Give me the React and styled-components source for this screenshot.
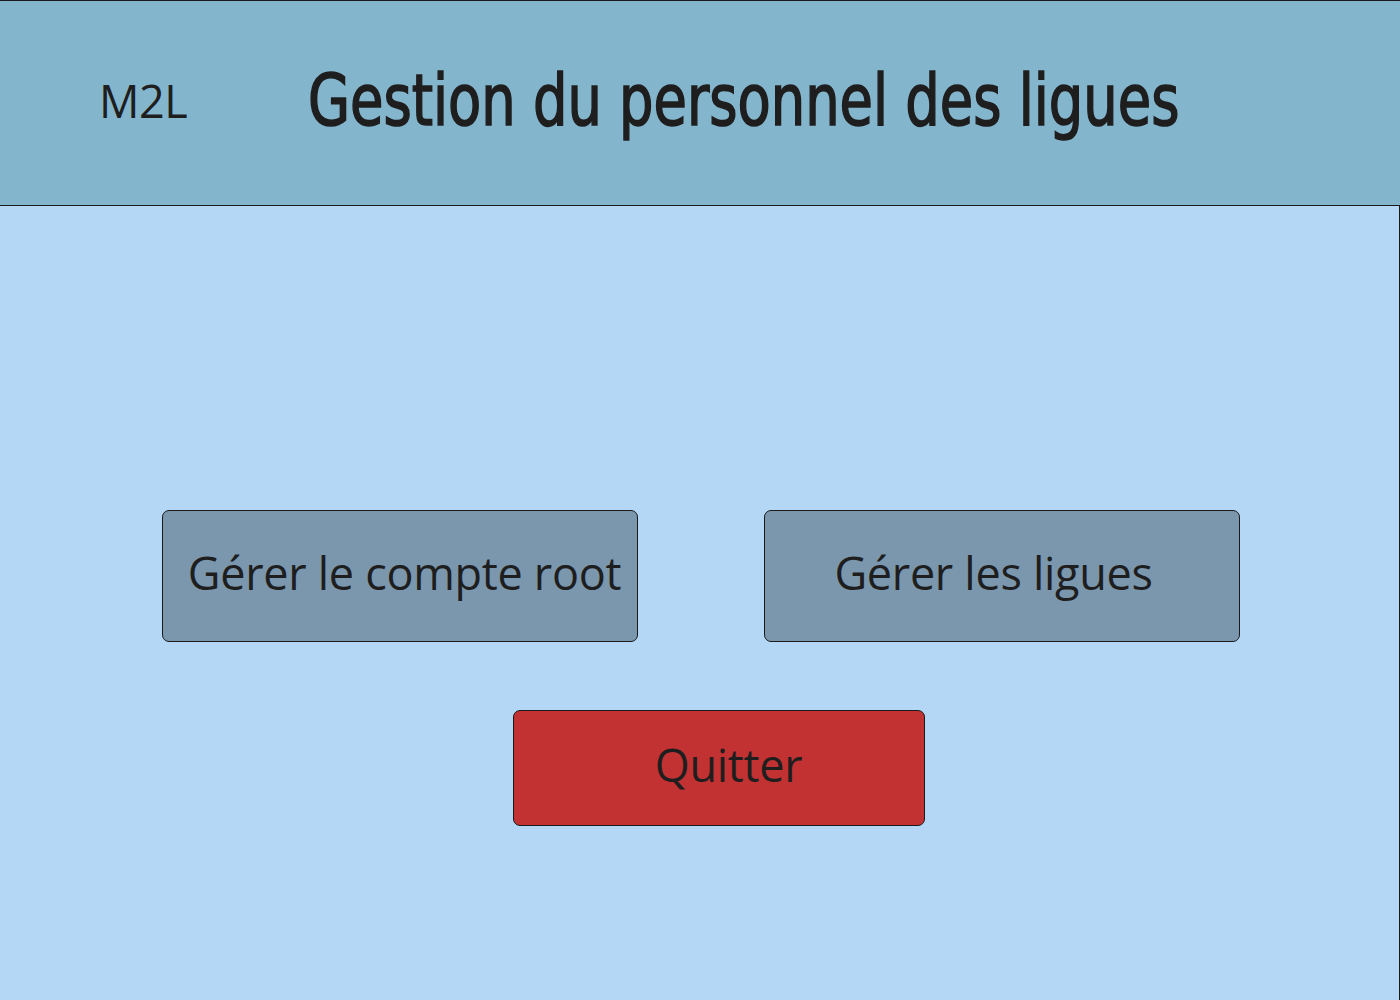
import React from 'react'
import styled, { createGlobalStyle } from 'styled-components'

const GlobalStyle = createGlobalStyle`
  html, body {
    margin: 0;
    padding: 0;
    background: #b3d7f5;
  }
  body {
    font-family: "Open Sans", "Liberation Sans", sans-serif;
    color: #1f1e1f;
  }
`;

const Page = styled.div`
  display: flex;
  flex-direction: column;
  width: 1400px;
  height: 1000px;
  box-sizing: border-box;
`;

const Header = styled.header`
  display: flex;
  align-items: center;
  height: 206px;
  box-sizing: border-box;
  padding: 0 0 6px 99px;
  background: #83b6cd;
  border-top: 1px solid #1a1a1a;
  border-bottom: 1px solid #1a1a1a;
`;

const Logo = styled.span`
  flex-shrink: 0;
  width: 209px;
  font-family: "Open Sans", sans-serif;
  font-size: 45px;
  letter-spacing: -0.5px;
`;

const Title = styled.h1`
  margin: 0;
  font-family: "DejaVu Sans Condensed", "Liberation Sans Narrow", sans-serif;
  font-weight: 400;
  font-size: 72px;
  -webkit-text-stroke: 1.6px #1f1e1f;
  transform-origin: left center;
  transform: scaleX(0.838);
  white-space: nowrap;
`;

const Main = styled.main`
  flex: 1;
  display: flex;
  flex-direction: column;
  align-items: center;
  gap: 68px;
  padding: 304px 0 0 2px;
  border-right: 1px solid #1a1a1a;
`;

const Row = styled.div`
  display: flex;
  gap: 126px;
`;

const ActionButton = styled.button`
  display: flex;
  align-items: center;
  justify-content: center;
  width: ${p => p.$w}px;
  height: ${p => p.$h}px;
  margin-left: ${p => p.$shift || 0}px;
  padding: 0 ${p => p.$offset < 0 ? -2 * p.$offset : 0}px 8px ${p => p.$offset > 0 ? 2 * p.$offset : 0}px;
  box-sizing: border-box;
  background: ${p => p.$danger ? '#c33232' : '#7a97ae'};
  border: 1px solid #1a1a1a;
  border-radius: 7px;
  font-family: "Open Sans", sans-serif;
  font-size: 45px;
  letter-spacing: -0.3px;
  color: #1f1e1f;
  cursor: pointer;
`;

export default function App() {
  return (
    <Page>
      <GlobalStyle />
      <Header>
        <Logo>M2L</Logo>
        <Title>Gestion du personnel des ligues</Title>
      </Header>
      <Main>
        <Row>
          <ActionButton $w={476} $h={132} $offset={5}>Gérer le compte root</ActionButton>
          <ActionButton $w={476} $h={132} $offset={-8}>Gérer les ligues</ActionButton>
        </Row>
        <ActionButton $w={412} $h={116} $shift={36} $offset={10} $danger>Quitter</ActionButton>
      </Main>
    </Page>
  )
}
